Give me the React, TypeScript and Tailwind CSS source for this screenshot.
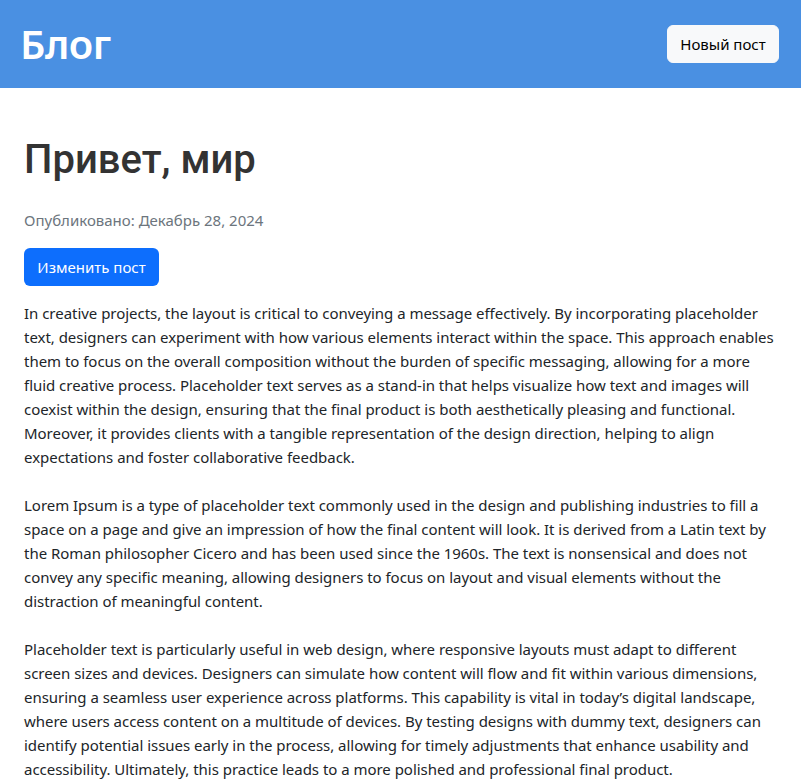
import React from "react";

const paragraphs: string[][] = [
  [
    "In creative projects, the layout is critical to conveying a message effectively. By incorporating placeholder",
    "text, designers can experiment with how various elements interact within the space. This approach enables",
    "them to focus on the overall composition without the burden of specific messaging, allowing for a more",
    "fluid creative process. Placeholder text serves as a stand-in that helps visualize how text and images will",
    "coexist within the design, ensuring that the final product is both aesthetically pleasing and functional.",
    "Moreover, it provides clients with a tangible representation of the design direction, helping to align",
    "expectations and foster collaborative feedback.",
  ],
  [
    "Lorem Ipsum is a type of placeholder text commonly used in the design and publishing industries to fill a",
    "space on a page and give an impression of how the final content will look. It is derived from a Latin text by",
    "the Roman philosopher Cicero and has been used since the 1960s. The text is nonsensical and does not",
    "convey any specific meaning, allowing designers to focus on layout and visual elements without the",
    "distraction of meaningful content.",
  ],
  [
    "Placeholder text is particularly useful in web design, where responsive layouts must adapt to different",
    "screen sizes and devices. Designers can simulate how content will flow and fit within various dimensions,",
    "ensuring a seamless user experience across platforms. This capability is vital in today\u2019s digital landscape,",
    "where users access content on a multitude of devices. By testing designs with dummy text, designers can",
    "identify potential issues early in the process, allowing for timely adjustments that enhance usability and",
    "accessibility. Ultimately, this practice leads to a more polished and professional final product.",
  ],
];

export default function App() {
  return (
    <div className="min-h-screen bg-white font-['Noto_Sans',sans-serif] text-[#212529]">
      <header className="flex h-[88px] items-center justify-between bg-[#4a90e2] pl-5 pr-[22px]">
        <h1 className="text-[40px] font-semibold leading-[48px] tracking-[-0.5px] text-white">Блог</h1>
        <button className="flex h-[38px] w-[112px] items-center justify-center rounded-md border border-[#f8f9fa] bg-[#f8f9fa] text-[15px] text-black">
          Новый пост
        </button>
      </header>
      <main className="px-6 pt-12">
        <h2 className="mb-6 font-['Roboto',sans-serif] text-[40px] font-medium leading-[48px] text-[#333333]">
          Привет, мир
        </h2>
        <p className="mb-4 text-[15px] leading-6 text-[#6c757d]">Опубликовано: Декабрь 28, 2024</p>
        <button className="mb-[15px] flex h-[38px] w-[135px] items-center justify-center rounded-md bg-[#0d6efd] text-[15px] text-white">
          Изменить пост
        </button>
        {paragraphs.map((lines, i) => (
          <p key={i} className="mb-6 whitespace-nowrap text-[15px] leading-6 tracking-[-0.03px]">
            {lines.map((l, j) => (
              <React.Fragment key={j}>
                {l}
                {j < lines.length - 1 && <br />}
              </React.Fragment>
            ))}
          </p>
        ))}
      </main>
    </div>
  );
}
